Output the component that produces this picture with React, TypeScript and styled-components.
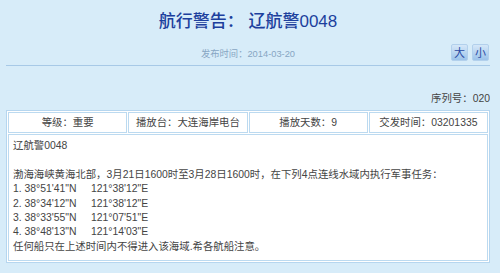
import styled, { createGlobalStyle } from 'styled-components'

const GlobalStyle = createGlobalStyle`
  html, body {
    margin: 0;
    padding: 0;
    background: #d7ecf9;
  }
  body {
    font-family: "Liberation Sans", "Noto Sans CJK SC", sans-serif;
    font-size: 10.4px;
    color: #333;
  }
`

const Page = styled.div`
  width: 484px;
  margin: 0 10px 0 6px;
  height: 273px;
  overflow: hidden;
`

const Header = styled.div`
  padding-top: 10px;
  padding-bottom: 4px;
  border-bottom: 1px solid #a7c9e7;
`

const Title = styled.h1`
  margin: 0;
  font-size: 17px;
  line-height: 24px;
  font-weight: 500;
  color: #1c3f9d;
  text-align: center;
`

const MetaRow = styled.div`
  margin-top: 10px;
  display: grid;
  grid-template-columns: 1fr auto 1fr;
  align-items: center;
  height: 17px;
`

const PublishDate = styled.div`
  grid-column: 2;
  font-size: 9.3px;
  color: #87a6c3;
`

const SizeButtons = styled.div`
  grid-column: 3;
  justify-self: end;
  display: flex;
  gap: 4px;
  margin-right: 1px;
`

const SizeButton = styled.button`
  width: 17px;
  height: 17px;
  padding: 0;
  border: 1px solid #b2d0ec;
  border-radius: 2px;
  background: linear-gradient(#d5e7f8, #9cc3ea);
  color: #2a4aa3;
  font-family: "Noto Sans CJK SC", sans-serif;
  font-size: 11px;
  font-weight: normal;
  line-height: 15px;
  cursor: pointer;
`

const Serial = styled.div`
  margin-top: 26px;
  text-align: right;
  line-height: 14px;
  color: #444;
`

const Table = styled.div`
  margin-top: 4px;
  background: #fff;
  border: 1px solid #b6d6ef;
  padding: 1px;
  display: grid;
  grid-template-columns: repeat(4, 1fr);
  gap: 1px;
`

const HeadCell = styled.div`
  height: 19px;
  line-height: 19px;
  border: 1px solid #bcdaf0;
  text-align: center;
  color: #444;
`

const BodyCell = styled.div`
  grid-column: 1 / -1;
  border: 1px solid #bcdaf0;
  padding: 4px 4px 6px;
  line-height: 14.4px;
  color: #444;
`

const Line = styled.div`
  min-height: 14.4px;
  white-space: pre;
`

const points = [
  "1. 38°51'41\"N     121°38'12\"E",
  "2. 38°34'12\"N     121°38'12\"E",
  "3. 38°33'55\"N     121°07'51\"E",
  "4. 38°48'13\"N     121°14'03\"E",
]

const App = () => {
  return (
    <>
      <GlobalStyle />
      <Page>
        <Header>
          <Title>航行警告： 辽航警0048</Title>
          <MetaRow>
            <PublishDate>发布时间：2014-03-20</PublishDate>
            <SizeButtons>
              <SizeButton>大</SizeButton>
              <SizeButton>小</SizeButton>
            </SizeButtons>
          </MetaRow>
        </Header>
        <Serial>序列号：020</Serial>
        <Table>
          <HeadCell>等级：重要</HeadCell>
          <HeadCell>播放台：大连海岸电台</HeadCell>
          <HeadCell>播放天数：9</HeadCell>
          <HeadCell>交发时间：03201335</HeadCell>
          <BodyCell>
            <Line>辽航警0048</Line>
            <Line />
            <Line>渤海海峡黄海北部，3月21日1600时至3月28日1600时，在下列4点连线水域内执行军事任务：</Line>
            {points.map((p) => (
              <Line key={p}>{p}</Line>
            ))}
            <Line>任何船只在上述时间内不得进入该海域.希各航船注意。</Line>
          </BodyCell>
        </Table>
      </Page>
    </>
  )
}

export default App
